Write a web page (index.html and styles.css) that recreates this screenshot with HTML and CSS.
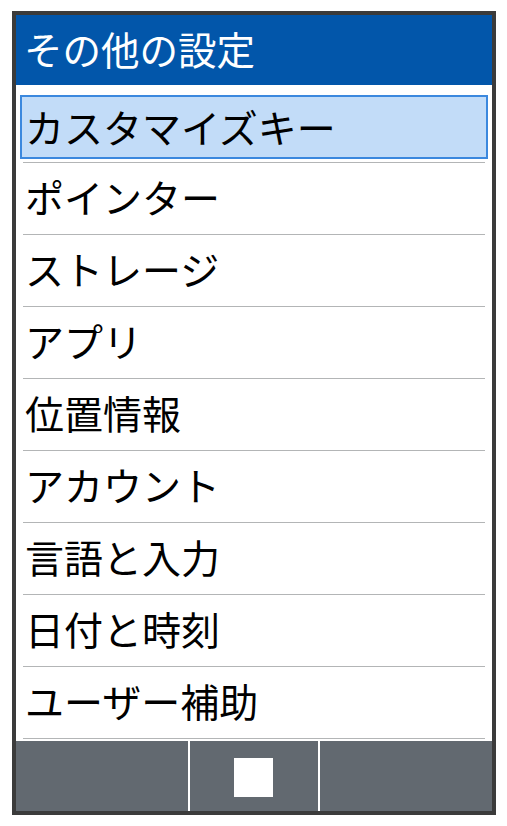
FILE: index.html
```html
<!DOCTYPE html>
<html lang="ja">
<head>
<meta charset="utf-8">
<link rel="stylesheet" href="styles.css">
</head>
<body>
<div class="phone">
  <div class="header">その他の設定</div>
  <ul class="list">
    <li class="row selected"><span class="sel">カスタマイズキー</span></li>
    <li class="row"><span class="label">ポインター</span></li>
    <li class="row"><span class="label">ストレージ</span></li>
    <li class="row"><span class="label">アプリ</span></li>
    <li class="row"><span class="label">位置情報</span></li>
    <li class="row"><span class="label">アカウント</span></li>
    <li class="row"><span class="label">言語と入力</span></li>
    <li class="row"><span class="label">日付と時刻</span></li>
    <li class="row"><span class="label">ユーザー補助</span></li>
  </ul>
  <div class="softkeys">
    <div class="key side"></div>
    <div class="key mid"><span class="square"></span></div>
    <div class="key side"></div>
  </div>
</div>
</body>
</html>
```
FILE: styles.css
```css
html, body {
  margin: 0;
  padding: 0;
  background: #ffffff;
}
body {
  padding: 11px 0 0 12px;
  font-family: "Noto Sans CJK JP", "Noto Sans", sans-serif;
}
.phone {
  width: 476px;
  height: 796px;
  border: 4px solid #3b3b3b;
  background: #ffffff;
  display: flex;
  flex-direction: column;
}
.header {
  height: 70px;
  background: #0256aa;
  color: #ffffff;
  font-size: 38.5px;
  line-height: 1;
  display: flex;
  align-items: center;
  padding-left: 8px;
  padding-bottom: 4px;
  box-sizing: border-box;
}
.list {
  list-style: none;
  margin: 0;
  padding: 6px 0 0 0;
}
.row {
  height: 72px;
  box-sizing: border-box;
  display: flex;
  align-items: stretch;
  position: relative;
  font-size: 39px;
  color: #000000;
}
.row::after {
  content: "";
  position: absolute;
  left: 7px;
  right: 7px;
  bottom: 0;
  height: 1px;
  background: #b3b5b6;
}
.label {
  display: flex;
  align-items: center;
  padding-left: 9px;
  padding-bottom: 6px;
  line-height: 1;
}
.sel {
  flex: 1;
  margin: 4px 4px 4px 4px;
  border: 2px solid #3b88de;
  background: #c2dcf8;
  display: flex;
  align-items: center;
  padding-left: 3px;
  padding-bottom: 2px;
  line-height: 1;
}
.softkeys {
  margin-top: 2px;
  height: 70px;
  display: flex;
  background: #ffffff;
  gap: 2px;
}
.key {
  background: #626970;
}
.side {
  width: 172px;
}
.mid {
  width: 128px;
  display: flex;
  align-items: center;
  justify-content: center;
  padding-top: 3px;
  padding-right: 2px;
  box-sizing: border-box;
}
.square {
  width: 39px;
  height: 39px;
  background: #ffffff;
}
```
